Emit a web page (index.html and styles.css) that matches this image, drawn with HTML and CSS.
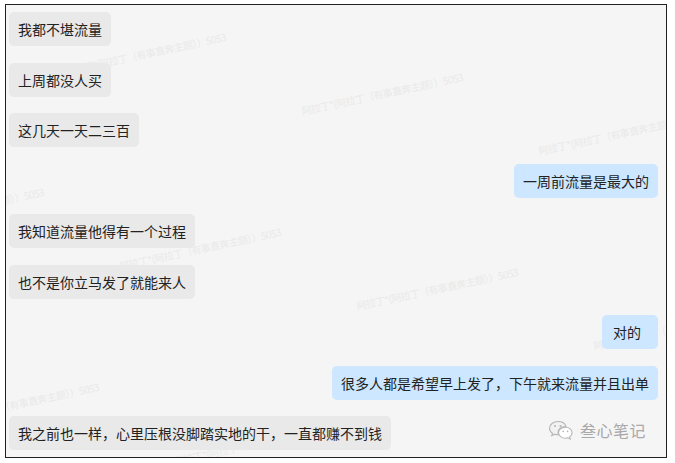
FILE: index.html
```
<!DOCTYPE html>
<html lang="zh">
<head>
    <meta charset="UTF-8">
    <meta name="viewport" content="width=device-width, initial-scale=1.0">
    <title>聊天记录</title>
    <link rel="stylesheet" href="styles.css">
</head>
<body>
    <div class="chat">
        <div class="watermarks" id="watermarks"></div>

        <div class="msg left"><span class="bubble">我都不堪流量</span></div>
        <div class="msg left"><span class="bubble">上周都没人买</span></div>
        <div class="msg left"><span class="bubble">这几天一天二三百</span></div>
        <div class="msg right"><span class="bubble">一周前流量是最大的</span></div>
        <div class="msg left"><span class="bubble">我知道流量他得有一个过程</span></div>
        <div class="msg left"><span class="bubble">也不是你立马发了就能来人</span></div>
        <div class="msg right"><span class="bubble short">对的</span></div>
        <div class="msg right"><span class="bubble">很多人都是希望早上发了，下午就来流量并且出单</span></div>
        <div class="msg left"><span class="bubble">我之前也一样，心里压根没脚踏实地的干，一直都赚不到钱</span></div>

        <div class="brand">
            <svg class="brand-icon" width="26" height="20" viewBox="0 0 26 20">
                <path d="M10 1.5C5.3 1.5 1.5 4.5 1.5 8.2c0 2.1 1.2 3.9 3 5.1l-.8 2.4 2.9-1.5c1 .3 2.1.5 3.2.5h.6c-.3-.7-.4-1.4-.4-2.1 0-3.4 3.3-6.1 7.4-6.1h.5C17.2 3.6 14 1.5 10 1.5z" fill="#f2f2f2" stroke="#b5b5b5" stroke-width="1.1"/>
                <circle cx="7" cy="6" r="1" fill="#b5b5b5"/>
                <circle cx="12.5" cy="6" r="1" fill="#b5b5b5"/>
                <path d="M17.5 7.2c-3.9 0-7 2.5-7 5.5s3.1 5.5 7 5.5c.8 0 1.6-.1 2.4-.4l2.3 1.2-.6-2c1.5-1 2.5-2.6 2.5-4.3 0-3-3.1-5.5-6.6-5.5z" fill="#ffffff" stroke="#b5b5b5" stroke-width="1.1"/>
                <circle cx="15.2" cy="11.3" r=".85" fill="#b5b5b5"/>
                <circle cx="19.6" cy="11.3" r=".85" fill="#b5b5b5"/>
            </svg>
            <span class="brand-name">叁心笔记</span>
        </div>
    </div>

    <script>
        // 平铺水印：按两个方向的间距生成
        const layer = document.getElementById("watermarks");
        const text = "阿拉丁*(阿拉丁（有事直奔主题））5053";

        for (let i = -2; i <= 3; i++) {
            for (let j = -1; j <= 3; j++) {
                const endX = 238 + 237 * i - 182 * j;
                const endY = 42 + 40 * i + 155 * j;
                const x = endX - 172;
                const y = endY + 36;
                if (x < -200 || x > 680 || y < -20 || y > 500) continue;
                const mark = document.createElement("span");
                mark.className = "watermark";
                mark.innerText = text;
                mark.style.left = x + "px";
                mark.style.top = (y - 14) + "px";
                layer.appendChild(mark);
            }
        }
    </script>
</body>
</html>
```

FILE: styles.css
```
body {
    margin: 4px 0 0 5px;
    background-color: #ffffff;
    font-family: "Noto Sans CJK SC", "Noto Sans", sans-serif;
}

.chat {
    position: relative;
    width: 649px;
    height: 445px;
    border: 1px solid #222;
    background-color: #f5f5f5;
    overflow: hidden;
    display: flex;
    flex-direction: column;
    gap: 16.5px;
    padding: 7px 8px 0 3px;
}

.watermarks {
    position: absolute;
    left: -6px;
    top: -5px;
    right: 0;
    bottom: 0;
}

.watermark {
    position: absolute;
    white-space: nowrap;
    font-size: 10px;
    letter-spacing: -0.5px;
    line-height: 14px;
    color: #e9e9e9;
    transform-origin: 0 100%;
    transform: rotate(-12deg);
}

.msg {
    position: relative;
    display: flex;
}

.msg.right {
    justify-content: flex-end;
}

.bubble {
    display: inline-block;
    font-size: 14px;
    line-height: 20px;
    padding: 7px 9px;
    border-radius: 5px;
    color: #222;
    background-color: #e9e9e9;
}

.msg.right .bubble {
    background-color: #cce7ff;
}

.bubble.short {
    padding: 7px 17px 7px 11px;
}

.brand {
    position: absolute;
    left: 542px;
    top: 413px;
    display: flex;
    align-items: center;
    gap: 6px;
}

.brand-name {
    font-size: 16px;
    color: #a8a8a8;
    letter-spacing: 0.5px;
}
```
